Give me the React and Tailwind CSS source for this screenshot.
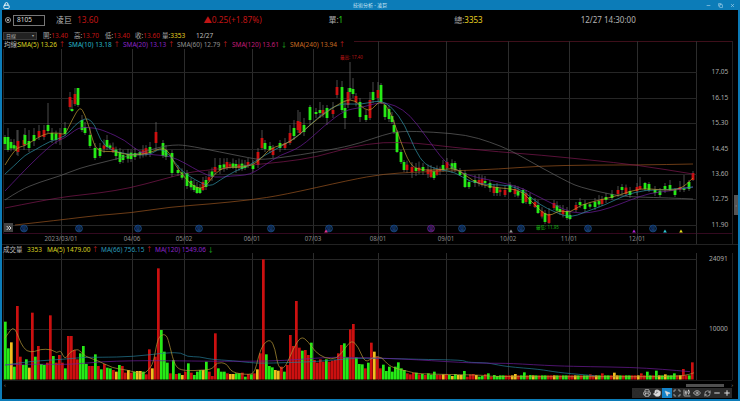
import React from "react";
import { Printer, Hand, MousePointer2, Eye, RefreshCw, Minus, Plus, Maximize, ChartCandlestick, Lock, X, Copy, ChevronsRight, Square } from "lucide-react";

const GREEN = "#26ea16", RED = "#cc1010", YEL = "#f2bd1e";
const XS = [61, 132, 184, 252, 313, 378, 446, 508, 569, 637];
const DATES = ["2023/03/01", "04/06", "05/02", "06/01", "07/03", "08/01", "09/01", "10/02", "11/01", "12/01"];
const PRICES = [["17.05", 72], ["16.15", 98], ["15.30", 123], ["14.45", 149], ["13.60", 174], ["12.75", 199], ["11.90", 225]];

// [x, top, bottom, colour, wickTop, wickBottom]
const g = "g", r = "r";
const KEY = [
  [5, 137, 144, g, 135, 150], [8, 137, 150, g, 128, 152], [17, 146, 151, g, 130, 155], [18, 141, 152, r, 130, 156], [24, 140, 145, r, 134, 150],
  [25, 135, 144, g, 128, 146], [29, 141, 148, g, 130, 152], [34, 135, 141, g, 128, 146], [39, 131, 137, r, 125, 140], [44, 130, 137, r, 125, 140], [48, 125, 131, g, 103, 133],
  [52, 133, 140, g, 128, 143], [60, 134, 140, r, 128, 145], [65, 128, 134, g, 122, 136], [70, 97, 107, r, 92, 110], [72, 109, 111, g, 100, 112], [75, 94, 104, r, 88, 106], [78, 88, 105, g, 88, 107],
  [82, 120, 130, g, 115, 132], [85, 127, 133, g, 122, 135], [90, 135, 146, g, 128, 148], [95, 148, 158, g, 143, 160], [100, 148, 156, g, 143, 158], [107, 140, 147, g, 135, 150],
  [120, 152, 162, g, 148, 164], [123, 155, 160, g, 150, 163], [135, 153, 157, g, 148, 160], [150, 147, 153, g, 142, 157], [156, 132, 143, r, 122, 150], [163, 143, 156, g, 140, 158],
  [166, 150, 157, g, 145, 160], [172, 153, 173, g, 150, 177], [178, 170, 173, g, 165, 176], [187, 173, 186, g, 170, 189], [194, 185, 190, g, 180, 192], [197, 187, 193, g, 182, 194], [200, 188, 193, g, 184, 194], [203, 182, 190, r, 177, 191], [206, 180, 187, g, 176, 190],
  [215, 167, 172, r, 158, 174], [220, 165, 170, g, 158, 174], [227, 162, 168, r, 158, 170], [236, 164, 168, g, 160, 173], [245, 165, 168, g, 160, 170], [248, 162, 165, r, 158, 168],
  [253, 165, 169, g, 160, 172], [258, 152, 165, r, 148, 168], [262, 138, 148, r, 130, 150], [265, 143, 149, g, 140, 152], [270, 146, 150, g, 142, 153], [273, 148, 155, r, 145, 158], [280, 143, 148, g, 140, 152], [285, 143, 148, r, 138, 150], [290, 133, 143, r, 125, 145], [294, 128, 136, g, 120, 140],
  [298, 121, 130, r, 110, 133], [300, 122, 133, r, 112, 135], [304, 125, 132, g, 118, 136], [310, 107, 120, g, 105, 125], [316, 112, 114, g, 108, 118], [320, 110, 113, g, 102, 118], [327, 108, 118, g, 105, 125], [333, 110, 114, r, 102, 118],
  [337, 87, 95, r, 80, 98], [342, 87, 110, g, 81, 112], [345, 108, 118, g, 100, 129], [348, 92, 105, r, 88, 108], [350, 88, 92, g, 62, 100], [353, 89, 94, g, 78, 98], [360, 102, 117, g, 98, 122], [366, 115, 120, g, 110, 122], [370, 100, 118, r, 92, 120], [373, 92, 100, g, 82, 103], [378, 90, 98, r, 82, 102], [381, 85, 102, g, 83, 104],
  [385, 105, 117, g, 103, 120], [389, 109, 119, g, 105, 122], [392, 116, 122, g, 112, 124], [394, 125, 132, g, 120, 134], [397, 132, 152, g, 130, 153], [401, 152, 162, g, 150, 164], [404, 162, 170, g, 160, 172],
  [412, 167, 172, r, 162, 178], [416, 168, 171, g, 163, 176], [423, 167, 171, g, 163, 175], [431, 170, 177, r, 165, 178], [434, 171, 178, g, 167, 180], [443, 165, 170, g, 160, 172], [447, 162, 168, r, 158, 170], [455, 163, 170, g, 161, 172], [460, 170, 175, g, 168, 176], [465, 173, 187, g, 170, 188], [469, 182, 187, g, 180, 189], [475, 180, 183, g, 175, 187],
  [485, 181, 183, g, 176, 188], [490, 183, 188, g, 180, 192], [494, 187, 193, r, 184, 196], [497, 187, 193, g, 183, 196], [505, 190, 195, r, 186, 197], [510, 185, 192, g, 182, 193], [515, 189, 194, r, 185, 197], [523, 190, 203, g, 188, 204], [526, 193, 202, r, 190, 204], [530, 197, 204, g, 193, 206], [535, 202, 207, r, 198, 208], [538, 205, 213, g, 200, 214], [545, 213, 222, g, 210, 224], [549, 214, 223, r, 208, 224], [554, 203, 208, r, 200, 210],
  [560, 209, 212, g, 205, 215], [567, 211, 218, g, 207, 220], [570, 215, 219, g, 212, 220], [576, 205, 210, r, 202, 212], [580, 202, 205, g, 198, 208], [585, 204, 209, g, 200, 212], [595, 202, 207, g, 198, 210], [602, 199, 204, r, 196, 206], [606, 197, 200, g, 193, 203], [612, 194, 198, g, 190, 200], [618, 190, 194, r, 186, 197], [622, 187, 190, g, 184, 195], [630, 191, 195, g, 187, 198], [637, 187, 191, r, 183, 195], [640, 186, 189, r, 177, 190], [645, 183, 189, g, 182, 191], [649, 184, 190, g, 182, 192],
  [655, 190, 193, g, 186, 196], [660, 191, 195, g, 188, 197], [665, 186, 189, g, 183, 193], [670, 185, 190, g, 180, 191], [675, 190, 195, g, 188, 197], [680, 187, 190, r, 181, 192], [684, 188, 190, g, 175, 192], [689, 182, 189, g, 180, 191], [693, 173, 180, r, 171, 181],
];

function centerAt(x) {
  for (let i = 1; i < KEY.length; i++) {
    if (x <= KEY[i][0]) {
      const a = KEY[i - 1], b = KEY[i], t = (x - a[0]) / (b[0] - a[0]);
      return (a[1] + a[2]) / 2 * (1 - t) + (b[1] + b[2]) / 2 * t;
    }
  }
  return 180;
}
const CANDLES = [...KEY];
for (let i = 0; i < 230; i++) {
  const x = 5 + i * 3;
  if (KEY.some((k) => Math.abs(k[0] - x) < 2.2)) continue;
  const c = centerAt(x), h = 1.2 + ((i * 7) % 5) * 0.5;
  CANDLES.push([x, c - h, c + h, (i * 5) % 7 < 4 ? g : r, c - h - 2 - ((i * 3) % 5), c + h + 1 + ((i * 11) % 4)]);
}

const toV1 = (a, ox) => a.map(([z, y]) => [ox + z / 3, 240 + y / 3]);
const VHEAD = [
  [245,g],[325,g],[307,"y"],[380,g],[198,r],[350,r],[375,g],[358,g],[383,"y"],[218,r],[350,g],[318,r],[372,g],[375,g],[368,r],[226,r],[348,g],[368,r],[345,r],[368,r],[385,g],[288,r],[288,r],[330,r],[358,r],[340,g],[318,g],[372,g],[378,r],[378,r],[343,g],[378,r],[388,g],[372,r],[383,g],[385,g],[390,r],[395,"y"],[375,g],[378,r],[398,r],[390,"y"],[398,r],[395,g],[393,"y"],[393,"y"],[395,g],[403,r],[328,r],[385,"y"],[350,r],[85,r],[270,g],[335,g],[368,g],[400,r],[360,g],[402,r],[400,g],[405,"y"],[395,r],[370,g],[398,r],[405,g],[395,g],[390,g],[390,"y"],[365,g],[395,r],[408,r],[280,r],[385,g],[395,g],[395,g],[400,r],[402,"y"],[402,"y"],[400,g],[400,g],[398,r],[410,g],[402,r],
  [403,g],[400,r],
  [388,"y"],[340,r],[58,r],[343,g],[378,g],[382,g],[390,"y"],[392,"y"],[380,r],[395,g],[375,r],[285,r],[318,r],[183,r],[323,r],[332,g],[330,r],[345,r],[308,g],[360,r],[368,r],[358,r],[365,r],[358,g],[365,r],[362,r],[360,r],[340,r],[315,r],[310,g],[352,g],[268,r],[252,r],[352,g],[372,g],[373,g],[385,r],[368,g],[308,r],[335,"y"],[350,r],[385,r],[374,g],[393,g],[380,g],[395,g],[380,g],[367,g],[385,g],[390,g],[400,r],[403,r],[398,r],[398,g],[403,r],[402,g],[405,r],[400,g],[404,g],[395,g],[405,r],[405,r],[403,"y"],[403,r],[405,g],[408,"y"],[402,g],[405,"y"],[405,"y"],[393,g],[410,r],[403,r],[402,r],[405,"y"],[410,g],[408,g],[403,r],[400,g],[410,r],[405,g],[408,g],
];
// Later bars are placed by their x in the reference; all others are short.
const VSPECIAL = { 491: [400,g], 513: [402,"y"], 523: [397,g], 528: [405,g], 590: [403,r], 600: [400,r], 613: [398,"y"], 640: [400,r], 647: [395,g], 656: [392,g], 665: [403,"y"], 672: [400,g], 683: [387,r], 692: [367,r] };
const V = [...VHEAD];
while (V.length < 230) {
  const i = V.length, x = 4 + i * 3;
  const key = Object.keys(VSPECIAL).find((k) => Math.abs(k - x) < 2);
  if (key) V.push(VSPECIAL[key]);
  else V.push([406 + (i * 7) % 7, ["r", "g", "r", "y", "r", "g", "g"][(i * 3) % 7]]);
}

function smooth(pts) {
  let d = `M${pts[0][0].toFixed(1)} ${pts[0][1].toFixed(1)}`;
  for (let i = 1; i < pts.length - 1; i++) {
    const mx = (pts[i][0] + pts[i + 1][0]) / 2, my = (pts[i][1] + pts[i + 1][1]) / 2;
    d += `Q${pts[i][0].toFixed(1)} ${pts[i][1].toFixed(1)} ${mx.toFixed(1)} ${my.toFixed(1)}`;
  }
  const l = pts[pts.length - 1];
  return d + `L${l[0].toFixed(1)} ${l[1].toFixed(1)}`;
}

const MAS = [
  ["#9a5420", [[15,225],[60,220],[100,215],[130,213],[170,207],[210,204],[250,200],[283,195],[350,180],[383,174],[417,172],[450,171],[500,169],[540,166],[590,165],[640,165],[693,164]]],
  ["#7e1850", [[5,208],[40,201],[70,196],[100,193],[130,188],[160,180],[190,172],[210,170],[250,165],[283,162],[317,157],[350,147],[383,142],[417,143],[450,147],[500,152],[540,155],[590,160],[637,165],[693,174]]],
  ["#646464", [[5,200],[20,190],[40,182],[60,176],[80,168],[100,163],[120,158],[140,153],[160,147],[172,145],[185,145],[220,152],[250,158],[262,160],[300,155],[340,148],[360,143],[383,135],[400,131],[433,132],[467,135],[490,142],[510,150],[540,167],[570,183],[580,187],[600,192],[620,196],[637,197],[670,198],[693,199]]],
  ["#6f1c9c", [[5,191],[20,175],[40,155],[55,142],[65,138],[75,130],[82,127],[95,128],[105,131],[125,140],[140,153],[155,155],[170,156],[185,163],[200,172],[215,178],[230,176],[250,175],[265,165],[280,155],[300,148],[325,125],[345,110],[360,108],[380,102],[395,105],[410,115],[425,135],[445,163],[465,175],[490,180],[520,187],[535,195],[555,205],[572,213],[590,213],[610,208],[630,200],[650,193],[670,191],[693,187]]],
  ["#2f94a8", [[5,174],[15,165],[25,155],[35,150],[50,141],[65,137],[75,125],[82,120],[88,118],[95,125],[100,140],[110,150],[130,155],[150,155],[160,148],[170,155],[180,170],[195,180],[210,187],[220,180],[235,171],[250,165],[265,155],[280,147],[300,135],[320,115],[340,103],[360,105],[380,100],[392,107],[405,125],[415,150],[425,165],[440,170],[455,172],[470,182],[490,185],[510,185],[525,192],[540,205],[555,212],[570,218],[585,212],[605,205],[625,195],[645,190],[665,190],[693,187]]],
  ["#c09c34", [[5,165],[15,148],[25,146],[45,133],[60,133],[65,135],[72,120],[80,106],[85,115],[90,130],[95,148],[103,152],[115,151],[130,156],[150,153],[160,148],[168,150],[175,165],[185,178],[195,188],[205,188],[215,173],[225,167],[250,167],[262,158],[270,148],[290,143],[310,125],[325,113],[345,100],[355,100],[365,110],[372,110],[380,100],[390,110],[400,140],[410,165],[420,170],[440,170],[455,168],[465,175],[480,185],[500,188],[520,190],[530,200],[545,215],[552,215],[560,210],[570,213],[580,205],[600,200],[620,195],[640,188],[660,190],[680,190],[693,178]]],
];

const VOL_MA = [
  ["#247c98", [...toV1([[15,375],[60,368],[120,362],[190,358],[250,352],[300,352],[400,350],[500,338],[545,338],[560,350],[600,350],[630,358],[700,362]], 0), ...toV1([[0,368],[40,370],[100,368],[200,365],[300,355],[400,355],[500,358],[640,360],[650,367],[700,368]], 250), ...toV1([[0,370],[50,380],[150,388],[200,397],[290,405],[320,408]], 490)]],
  ["#6f1c9c", [...toV1([[15,375],[60,372],[210,374],[300,365],[400,362],[500,362],[650,364]], 0), ...toV1([[0,364],[100,362],[230,352],[300,352],[450,356],[640,368]], 250), ...toV1([[0,370],[60,370],[200,378],[300,380],[420,382],[520,388],[600,395]], 490)]],
  ["#b89a38", [...toV1([[14,295],[25,280],[38,262],[50,275],[62,310],[80,335],[105,335],[120,328],[155,328],[170,340],[182,330],[195,360],[210,335],[235,325],[255,350],[290,360],[340,385],[370,388],[400,395],[430,403],[445,390],[460,370],[470,310],[480,285],[500,283],[510,320],[525,380],[550,393],[620,390],[640,385],[650,367],[680,370],[695,398]], 0), ...toV1([[0,405],[15,395],[25,350],[40,310],[62,298],[75,325],[85,385],[105,385],[130,325],[153,288],[175,305],[195,335],[225,355],[260,358],[285,325],[305,300],[325,320],[345,370],[370,350],[395,350],[420,382],[480,395],[500,402],[700,405]], 250), ...toV1([[0,410],[300,410],[560,410],[600,403],[612,398]], 490)]],
];

const RINGS = [[24,"#1f5fa8"],[79,"#1f5fa8"],[138,"#1f5fa8"],[199,"#1f5fa8"],[271,"#1f5fa8"],[329,"#1f5fa8"],[394,"#1f5fa8"],[431,"#8a22a8"],[462,"#1f5fa8"],[521,"#1f5fa8"],[588,"#1f5fa8"],[653,"#1f5fa8"]];
const TRIS = [[326,"#e0308a"],[511,"#9a9a9a"],[634,"#b020d8"],[665,"#30c8d8"],[681,"#e8e020"]];

function PriceChart() {
  return (
    <svg viewBox="2 41 736 203" className="block w-full h-[203px]" fontFamily="'Noto Sans','Noto Sans CJK TC',sans-serif">
      <line x1="3" x2="732" y1="41.5" y2="41.5" stroke="#3e0f1a" />
      <line x1="3" x2="732" y1="233.5" y2="233.5" stroke="#33091f" />
      <line x1="3.5" x2="3.5" y1="41" y2="233" stroke="#222" />
      <line x1="696.5" x2="696.5" y1="41" y2="244" stroke="#2c2c2c" />
      <line x1="732.5" x2="732.5" y1="41" y2="244" stroke="#222" />
      {XS.map((x) => <line key={x} x1={x + 0.5} x2={x + 0.5} y1="41" y2="244" stroke="#2c2c2c" />)}
      {PRICES.map(([t, y]) => <line key={t} x1="3" x2="697" y1={y + 0.5} y2={y + 0.5} stroke="#262626" />)}
      {CANDLES.map(([x, t, b, c, wt, wb], i) => (
        <g key={i}>
          <line x1={x} x2={x} y1={wt} y2={wb} stroke="#7d7d7d" strokeWidth="0.6" />
          <rect x={x - 1.4} y={t} width="2.8" height={b - t} fill={c === "g" ? GREEN : RED} />
        </g>
      ))}
      {MAS.map(([c, p]) => <path key={c} d={smooth(p)} fill="none" stroke={c} strokeWidth="0.7" />)}
      <text x="340" y="59" fontSize="4.5" fill="#b81414">最高: 17.40</text>
      <text x="536" y="229" fontSize="4.5" fill="#16b010">最低: 11.95</text>
      {RINGS.map(([x, c]) => (
        <g key={x}>
          <circle cx={x} cy="228.5" r="3.4" fill="#08142a" stroke={c} strokeWidth="0.7" />
          <text x={x} y="230.3" fontSize="4.6" fill={c} textAnchor="middle">息</text>
        </g>
      ))}
      {TRIS.map(([x, c]) => <polygon key={x} points={`${x - 1.8},232.5 ${x + 1.8},232.5 ${x},229.5`} fill={c} />)}
      {PRICES.map(([t, y]) => <text key={t} x="711.5" y={y + 2.4} fontSize="6.6" fill="#a8a8a8">{t}</text>)}
      {DATES.map((t, i) => <text key={t} x={XS[i]} y="240.5" fontSize="6.2" fill="#8c8c8c" textAnchor="middle">{t}</text>)}
    </svg>
  );
}

function VolumeChart() {
  return (
    <svg viewBox="2 253 736 129" className="block w-full h-[129px]" fontFamily="'Noto Sans','Noto Sans CJK TC',sans-serif">
      <line x1="3.5" x2="3.5" y1="253" y2="380" stroke="#222" />
      <line x1="696.5" x2="696.5" y1="253" y2="380" stroke="#2c2c2c" />
      <line x1="732.5" x2="732.5" y1="253" y2="380" stroke="#222" />
      {XS.map((x) => <line key={x} x1={x + 0.5} x2={x + 0.5} y1="253" y2="380" stroke="#2c2c2c" />)}
      {[259, 329].map((y) => <line key={y} x1="3" x2="697" y1={y + 0.5} y2={y + 0.5} stroke="#262626" />)}
      <line x1="3" x2="732" y1="380.5" y2="380.5" stroke="#1c1c1c" />
      {V.map(([z, c], i) => (
        <rect key={i} x={4 + i * 3} y={240 + z / 3} width="2.7" height={379.5 - (240 + z / 3)} fill={c === "g" ? GREEN : c === "r" ? RED : YEL} />
      ))}
      {VOL_MA.map(([c, p]) => <path key={c} d={smooth(p)} fill="none" stroke={c} strokeWidth="0.7" />)}
      <text x="709" y="261.4" fontSize="6.6" fill="#a8a8a8">24091</text>
      <text x="709" y="331.4" fontSize="6.6" fill="#a8a8a8">10000</text>
    </svg>
  );
}

const Tool = ({ children, active }) => (
  <div className={`w-[10px] h-[10px] flex items-center justify-center text-[#dcdcdc] ${active ? "bg-[#1583c8]" : "bg-[#2a2a2a]"}`}>{children}</div>
);

export default function App() {
  return (
    <div className="w-[740px] h-[401px] flex flex-col bg-black overflow-hidden text-[6.5px] leading-[9px] text-[#a8a8a8] [font-family:'Noto_Sans','Noto_Sans_CJK_TC',sans-serif]">
      <div className="h-[10px] shrink-0 bg-[#0c7cb8] flex items-center justify-between px-[3px] relative">
        <Lock size={7} className="text-white" strokeWidth={3} />
        <span className="absolute left-[353px] top-0 text-[5px] leading-[10px] text-[#cfe6f4]">技術分析 - 凌巨</span>
        <div className="flex items-center gap-[7px] pr-[2px] text-[#a8d4ec]">
          <Minus size={5} strokeWidth={3} />
          <Copy size={5} strokeWidth={3} />
          <X size={5} strokeWidth={3} />
        </div>
      </div>
      <div className="flex-1 min-h-0 flex flex-col border-x-2 border-b-2 border-[#0c7cb8]">
        <div className="h-[20px] shrink-0 flex items-center text-[8px] leading-[10px]">
          <div className="ml-[3px] w-[6px] h-[6px] rounded-full border border-[#999] flex items-center justify-center">
            <div className="w-[2px] h-[2px] bg-[#999]" />
          </div>
          <div className="ml-[2px] w-[32px] h-[11px] border border-[#777] flex items-center pl-[3px] text-[6.5px] text-[#ddd]">8105</div>
          <span className="ml-[11px] w-[21px] text-[#bbb]">凌巨</span>
          <span className="text-[#c01414] text-[8.4px]">13.60</span>
          <span className="ml-[105px] text-[#c01414] text-[8.4px] w-[125px]">▲0.25(+1.87%)</span>
          <span className="text-[#aaa]">單:<span className="text-[#26d616]">1</span></span>
          <span className="ml-[111px] text-[#aaa]">總:<span className="text-[#e8d020]">3353</span></span>
          <span className="ml-[98px] text-[#b4b4b4]">12/27 14:30:00</span>
        </div>
        <div className="h-[11px] shrink-0 flex items-center">
          <div className="ml-[1px] w-[34px] h-[8px] bg-[#222] border border-[#3a3a3a] flex items-center justify-between px-[2px] text-[5px] leading-[6px] text-[#aaa]">
            <span>日線</span><span className="text-[4px]">▾</span>
          </div>
          <span className="ml-[6px] w-[31px]">開:<span className="text-[#c01414]">13.40</span></span>
          <span className="w-[31px]">高:<span className="text-[#c01414]">13.70</span></span>
          <span className="w-[30px]">低:<span className="text-[#c01414]">13.40</span></span>
          <span className="w-[27px]">收:<span className="text-[#c01414]">13.60</span></span>
          <span className="w-[34px]">量:<span className="text-[#e8d020]">3353</span></span>
          <span className="text-[#bbb]">12/27</span>
        </div>
        <div className="relative shrink-0 h-[203px]">
          <PriceChart />
          <div className="absolute left-0 top-0 h-[8px] w-[352px] bg-black flex items-center pl-[2px] leading-[8px] whitespace-nowrap">
            <span className="w-[13.5px] text-[#bbb]">均線:</span>
            <span className="w-[51px] text-[#d8d020]">SMA(5) 13.26 <span className="text-[#d02020]">↑</span></span>
            <span className="w-[54.5px] text-[#28b8c8]">SMA(10) 13.18 <span className="text-[#d02020]">↑</span></span>
            <span className="w-[54px] text-[#8a24c8]">SMA(20) 13.13 <span className="text-[#d02020]">↑</span></span>
            <span className="w-[55px] text-[#909090]">SMA(60) 12.79 <span className="text-[#d02020]">↑</span></span>
            <span className="w-[58px] text-[#c01c78]">SMA(120) 13.61 <span className="text-[#20c020]">↓</span></span>
            <span className="text-[#c86a20]">SMA(240) 13.94 <span className="text-[#d02020]">↑</span></span>
          </div>
          <div className="absolute left-[2px] top-[182px] w-[9px] h-[9px] bg-[#444] flex items-center justify-center text-white">
            <ChevronsRight size={8} strokeWidth={2.5} />
          </div>
          <div className="absolute right-0 top-[154px] w-[4px] h-[20px] bg-[#555] flex items-center justify-center text-[#ccc] text-[4px]">‹</div>
        </div>
        <div className="h-[9px] shrink-0 flex items-center pl-[1px] leading-[9px] whitespace-nowrap border-t border-[#222]">
          <span className="w-[24px] text-[#bbb]">成交量</span>
          <span className="w-[20px] text-[#d8d020]">3353</span>
          <span className="w-[54px] text-[#d8d020]">MA(5) 1479.00 <span className="text-[#d02020]">↑</span></span>
          <span className="w-[54px] text-[#2a9ab8]">MA(66) 756.15 <span className="text-[#d02020]">↑</span></span>
          <span className="text-[#8a24c8]">MA(120) 1549.06 <span className="text-[#20c020]">↓</span></span>
        </div>
        <VolumeChart />
        <div className="flex-1 min-h-0 flex flex-col">
          <div className="h-[6px] shrink-0 flex items-center justify-between pl-[2px] pr-[5px] text-[#888] text-[6px] leading-[6px]">
            <span>‹</span>
            <div className="flex items-center gap-[7px]">
              <div className="w-[38px] h-[3px] bg-[#505050]" />
              <span>›</span>
            </div>
          </div>
          <div className="flex-1 min-h-0 flex justify-end items-start pr-[6px]">
            <div className="flex">
              <Tool><Square size={6} className="text-[#333]" /></Tool>
              <Tool><Printer size={8} /></Tool>
              <Tool><Hand size={8} fill="currentColor" /></Tool>
              <Tool active><MousePointer2 size={7} fill="currentColor" /></Tool>
              <Tool><Maximize size={8} /></Tool>
              <Tool><ChartCandlestick size={8} /></Tool>
              <Tool><Eye size={8} /></Tool>
              <Tool><RefreshCw size={7} /></Tool>
              <Tool><Minus size={8} strokeWidth={3} /></Tool>
              <Tool><Plus size={8} strokeWidth={3} /></Tool>
            </div>
          </div>
        </div>
      </div>
    </div>
  );
}
